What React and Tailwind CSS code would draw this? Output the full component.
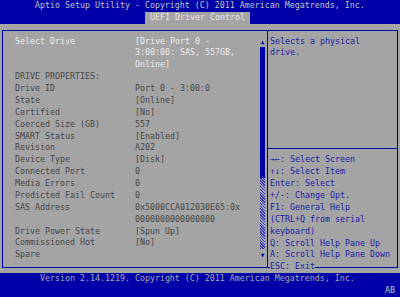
const ROW = "h-[11.88px] leading-[11.88px]";

const LEFT_ROWS = [
  { label: "Select Drive", value: "[Drive Port 0 - ", hi: true },
  { label: "", value: "3:00:00: SAS, 557GB,", hi: true },
  { label: "", value: "Online]", hi: true },
  { label: "DRIVE PROPERTIES:", value: "" },
  { label: "Drive ID", value: "Port 0 - 3:00:0" },
  { label: "State", value: "[Online]" },
  { label: "Certified", value: "[No]" },
  { label: "Coerced Size (GB)", value: "557" },
  { label: "SMART Status", value: "[Enabled]" },
  { label: "Revision", value: "A202" },
  { label: "Device Type", value: "[Disk]" },
  { label: "Connected Port", value: "0" },
  { label: "Media Errors", value: "0" },
  { label: "Predicted Fail Count", value: "0" },
  { label: "SAS Address", value: "0x5000CCA012030E65:0x" },
  { label: "", value: "0000000000000000" },
  { label: "Drive Power State", value: "[Spun Up]" },
  { label: "Commissioned Hot", value: "[No]" },
  { label: "Spare", value: "" },
];

const HELP = [
  "\u2192\u2190: Select Screen",
  "\u2191\u2193: Select Item",
  "Enter: Select",
  "+/-: Change Opt.",
  "F1: General Help",
  "(CTRL+Q from serial",
  "keyboard)",
  "Q: Scroll Help Pane Up",
  "A: Scroll Help Pane Down",
];

export default function App() {
  return (
    <div className="w-[400px] h-[297px] overflow-hidden bg-[#0000a8] whitespace-pre font-['DejaVu_Sans_Mono','Liberation_Mono',monospace] text-[8.3px]">
      {/* header */}
      <div className={`${ROW} pl-[35px] text-[#c4c4c4]`}>
        Aptio Setup Utility - Copyright (C) 2011 American Megatrends, Inc.
      </div>
      <div className={`${ROW} flex pl-[145px]`}>
        <div className="w-[105px] bg-[#a4a4a4] pl-[5px] text-[#e4e4e4]">UEFI Driver Control</div>
      </div>

      {/* main area */}
      <div className="h-[249.48px] bg-[#a4a4a4] pt-[6.24px] px-[2px]">
        <div className="h-[238px] border border-[#0000a8] flex">
          {/* left panel */}
          <div className="w-[264px] pt-[4.64px] flex">
            <div className="w-[257px] pl-[12px]">
              {LEFT_ROWS.map((r, i) => (
                <div key={i} className={`${ROW} flex ${r.hi ? "text-[#ececec]" : "text-[#474747]"}`}>
                  <span className="w-[120px]">{r.label}</span>
                  <span>{r.value}</span>
                </div>
              ))}
            </div>
            <div className="w-[5px] flex flex-col text-[#0000a8]">
              <div className={`${ROW} flex justify-center text-[6px]`}>▲</div>
              <div className="h-[130.68px] bg-[#0000a8]" />
              <div className="h-[71.28px] bg-[repeating-linear-gradient(45deg,#3c3cb0_0px,#3c3cb0_1px,#a0a0b8_1px,#a0a0b8_2px)]" />
              <div className={`${ROW} flex justify-center text-[6px]`}>▼</div>
            </div>
          </div>

          {/* right panel */}
          <div className="relative flex-1 border-l border-[#0000a8] pt-[4.64px] text-[#1c1ca8]">
            <div className={`${ROW} pl-[2px]`}>Selects a physical</div>
            <div className={`${ROW} pl-[2px]`}>drive.</div>
            <div className="h-[83.16px]" />
            <div className={`${ROW} flex items-center`}>
              <div className="h-px w-full bg-[#0000a8]" />
            </div>
            {HELP.map((h, i) => (
              <div key={i} className={`${ROW} pl-[2px]`}>{h}</div>
            ))}
            <div className={`${ROW} absolute left-[2px] top-[230.36px] bg-[#a4a4a4]`}>ESC: Exit</div>
          </div>
        </div>
      </div>

      {/* footer */}
      <div className={`${ROW} pl-[40px] text-[#ababab]`}>
        Version 2.14.1219. Copyright (C) 2011 American Megatrends, Inc.
      </div>
      <div className={`${ROW} pl-[385px] text-[#c4c4c4]`}>AB</div>
    </div>
  );
}
